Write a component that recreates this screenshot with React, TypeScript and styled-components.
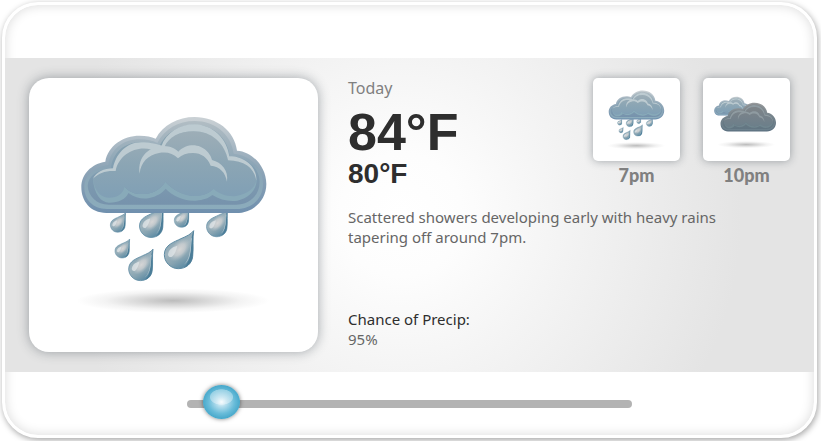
import React, { useId, useState } from "react";
import styled, { createGlobalStyle } from "styled-components";

const GlobalStyle = createGlobalStyle`
  *, *::before, *::after { box-sizing: border-box; }
  body {
    margin: 0;
    background: #fff;
    color: #666;
    font: 15px/20px "Noto Sans", "Open Sans", sans-serif;
  }
  h1, h2, p, dl, dd, ul { margin: 0; padding: 0; }
`;

const Card = styled.main`
  display: flex;
  flex-direction: column;
  margin: 2px 4px 3px 2px;
  padding: 53px 0 0;
  border: 3px solid #fff;
  border-radius: 36px;
  background: #fff;
  box-shadow:
    1px 2px 6px rgba(0, 0, 0, 0.36),
    inset 0 0 12px rgba(0, 0, 0, 0.15);
`;

const Panel = styled.section`
  display: flex;
  gap: 30px;
  padding: 20px 24px;
  background: radial-gradient(circle 340px at 49% 50%, #fff 0%, #fdfdfd 18%, #f3f3f3 50%, #e4e4e4 100%);
`;

const Tile = styled.div<{ $large?: boolean }>`
  flex: none;
  display: flex;
  justify-content: center;
  width: ${(p) => (p.$large ? 289 : 87)}px;
  height: ${(p) => (p.$large ? 274 : 83)}px;
  padding-top: ${(p) => (p.$large ? 27 : 9)}px;
  border-radius: ${(p) => (p.$large ? 20 : 5)}px;
  background: #fff;
  box-shadow: 0 0 ${(p) => (p.$large ? 12 : 9)}px rgba(70, 80, 88, 0.48);
`;

const Picture = styled.svg<{ $size: number }>`
  flex: none;
  width: ${(p) => p.$size}px;
  height: ${(p) => p.$size}px;
  overflow: visible;
`;

const Details = styled.div`
  flex: 1;
  min-width: 0;
  display: flex;
  flex-direction: column;
`;

const Summary = styled.div`
  display: flex;
  justify-content: space-between;
  min-height: 129px;
`;

const Day = styled.h1`
  font-size: 16px;
  font-weight: 400;
  line-height: 20px;
  color: #808080;
`;

const Temperature = styled.p<{ $size: number; $line: number }>`
  font: bold ${(p) => p.$size}px/${(p) => p.$line}px "Liberation Sans", Arial, sans-serif;
  color: #2e2e2e;
`;

const Hours = styled.ul`
  display: flex;
  gap: 23px;
  list-style: none;
`;

const Hour = styled.li`
  display: flex;
  flex-direction: column;
  align-items: center;
  gap: 3px;
`;

const HourLabel = styled.h2`
  font: 900 18px/22px Lato, sans-serif;
  color: #808080;
`;

const Description = styled.p`
  max-width: 400px;
`;

const Precipitation = styled.dl`
  margin-top: auto;
  margin-bottom: 3px;

  dt { color: #2e2e2e; }
`;

const Footer = styled.footer`
  display: flex;
  justify-content: center;
  padding: 15px 0 14px;
`;

const TimeSlider = styled.input`
  appearance: none;
  width: 55%;
  height: 34px;
  margin: 0;
  background: none;
  cursor: pointer;

  &::-webkit-slider-runnable-track {
    height: 8px;
    border-radius: 4px;
    background: #b3b3b3;
  }

  &::-webkit-slider-thumb {
    appearance: none;
    width: 37px;
    height: 34px;
    margin-top: -15px;
    border: none;
    border-radius: 50%;
    background:
      radial-gradient(ellipse 12px 8px at 50% 12px, rgba(255, 255, 255, 0.34) 92%, transparent 100%),
      radial-gradient(ellipse 19px 17px at 50% 50%, #f4fbfd 0%, #b4dded 28%, #69bcd9 68%, #45a7ca 100%);
    box-shadow: 0 0 4px rgba(0, 0, 0, 0.5);
  }
`;

const CLOUD =
  "M110 322C62 322 35 286 35 245C35 205 65 175 107 168C115 120 160 90 210 90C230 90 245 93 258 99C280 58 325 34 375 34C440 34 495 75 502 135C550 138 590 185 590 235C590 285 550 322 500 322Z";
const CLOUD_MID =
  "M112 310C68 310 44 280 44 245C44 210 74 184 116 178C122 132 160 101 210 101C232 101 248 105 263 112C284 70 326 46 375 46C434 46 484 84 492 144C544 149 580 188 580 235C580 279 546 310 500 310Z";
const CLOUD_INNER =
  "M118 297C80 297 56 270 54 240C56 213 80 192 124 188C128 142 164 110 212 110C234 110 252 114 268 123C288 80 328 57 375 57C428 57 474 94 480 152C535 154 570 190 570 228C570 268 540 297 498 297Z";
const SCALLOPS =
  "M70 220C72 265 95 291 118 291C148 291 169 280 176 262C196 276 216 281 236 278C262 272 278 262 288 249C306 268 340 287 378 285C402 283 418 277 428 268C450 282 478 289 503 285C543 276 562 248 561 220L429 250C419 263 400 270 375 270C340 270 306 250 287 228C275 248 255 262 226 265C200 267 178 260 165 243Z";
const PUFFS =
  "M70 220C75 260 95 276 118 276C146 276 160 263 165 243C178 260 200 267 226 265C255 262 275 248 287 228C306 250 340 271 375 271C400 271 419 263 432 250C448 266 475 274 500 271C540 264 560 242 560 220C558 188 525 166 475 163C465 110 425 77 372 77C325 77 290 100 275 130C230 112 145 120 137 190C105 190 80 200 70 220Z";
const BACK_RIM =
  "M275 122C290 80 330 56 375 56C430 58 472 98 479 152C525 152 562 184 560 224C552 185 525 166 475 164C465 112 425 77 372 77C330 77 298 94 284 124Z";
const LEFT_RIM =
  "M70 219C80 199 102 188 130 188C137 150 166 110 215 110C242 110 262 116 283 122L246 132C202 118 147 145 138 196C110 194 86 202 70 219Z";
const FRONT_RIM =
  "M210 204C202 150 242 121 283 121C303 122 316 128 326 138C345 117 373 115 392 123C412 131 425 150 427 163C456 170 477 194 472 228C467 200 451 183 423 180C414 156 395 142 370 142C351 142 337 147 325 158C310 142 290 138 268 142C235 148 213 170 210 204Z";
const DROP =
  "M46-72C42-48 46-20 43 5C41 28 22 42 0 42C-24 42-42 22-42 0C-42-30-12-38 8-48C24-55 38-61 46-72Z";

const DROPS = [
  [144, 358, 0.52],
  [244, 361, 0.82],
  [335, 344, 0.5],
  [441, 363, 0.72],
  [157, 436, 0.5],
  [212, 490, 0.83],
  [326, 447, 1],
];

const palettes = {
  blue: {
    rim: ["#c9d0d4", "#91a7b8", "#7090ae"],
    mid: ["#b3bec4", "#8ba5b6", "#8bacbc"],
    inner: ["#8ba3ad", "#829fb2", "#7490ab"],
    puffs: ["#a4b1b8", "#8ba5b4", "#7b9db6"],
    light: "#bdcbd1",
    scallop: "#88aab9",
  },
  gray: {
    rim: ["#96999b", "#74828a", "#5b7080"],
    mid: ["#8b8f92", "#74838c", "#6b808c"],
    inner: ["#7f8487", "#6f7e87", "#5f7481"],
    puffs: ["#828688", "#75818a", "#677e8a"],
    light: "#8f9ba1",
    scallop: "#70868f",
  },
};

type Tone = keyof typeof palettes;

function Cloud({ tone, transform }: { tone: Tone; transform?: string }) {
  const id = useId();
  const colors = palettes[tone];
  const layers = { rim: CLOUD, mid: CLOUD_MID, inner: CLOUD_INNER };
  const gradient = (name: "rim" | "mid" | "inner" | "puffs") => (
    <linearGradient key={name} id={`${id}${name}`} gradientUnits="userSpaceOnUse" x1="0" y1="40" x2="0" y2="320">
      <stop offset="0" stopColor={colors[name][0]} />
      <stop offset="0.5" stopColor={colors[name][1]} />
      <stop offset="1" stopColor={colors[name][2]} />
    </linearGradient>
  );
  return (
    <g transform={transform}>
      <defs>{(["rim", "mid", "inner", "puffs"] as const).map(gradient)}</defs>
      {(["rim", "mid", "inner"] as const).map((name) => (
        <path key={name} d={layers[name]} fill={`url(#${id}${name})`} />
      ))}
      <path d={SCALLOPS} fill={colors.scallop} />
      <path d={PUFFS} fill={`url(#${id}puffs)`} />
      <path d={`${LEFT_RIM}${BACK_RIM}`} fill={colors.light} />
      <path d={FRONT_RIM} fill={colors.light} />
    </g>
  );
}

function Raindrops() {
  const id = useId();
  return (
    <g>
      <defs>
        <linearGradient id={`${id}d`} x1="0.3" y1="0.1" x2="0.7" y2="1">
          <stop offset="0" stopColor="#7d9dad" />
          <stop offset="0.4" stopColor="#9fb4be" />
          <stop offset="0.7" stopColor="#86a3b1" />
          <stop offset="1" stopColor="#5687a2" />
        </linearGradient>
        <radialGradient id={`${id}g`}>
          <stop offset="0" stopColor="#d6d6d6" />
          <stop offset="0.5" stopColor="#cccfd1" stopOpacity="0.8" />
          <stop offset="1" stopColor="#b5c1c7" stopOpacity="0" />
        </radialGradient>
      </defs>
      {DROPS.map(([x, y, scale]) => (
        <g key={`${x}-${y}`} transform={`translate(${x} ${y}) scale(${scale})`}>
          <path d={DROP} fill={`url(#${id}d)`} stroke="#5f8ca4" strokeWidth="3" />
          <path d="M46-72C42-48 46-20 43 5C41 22 31 34 17 39C34 22 38-4 37-26C37-44 41-60 46-72Z" fill="#4b7d98" />
          <ellipse cx="4" cy="-15" rx="42" ry="24" transform="rotate(-48 4 -15)" fill={`url(#${id}g)`} />
          <path d="M-31 0C-29-16-20-22-3-27C-6-12-12 1-19 6C-25 9-30 6-31 0Z" fill="#dfe4e6" opacity="0.8" />
          <path d="M38-48C35-22 38 12 16 30C39 16 37-18 41-52Z" fill="#c3d3da" opacity="0.85" />
        </g>
      ))}
    </g>
  );
}

function WeatherPicture({ kind, size }: { kind: "showers" | "cloudy"; size: number }) {
  const id = useId();
  return (
    <Picture $size={size} viewBox="-2 -2 630 630" role="img" aria-label={kind === "showers" ? "Showers" : "Cloudy"}>
      <defs>
        <radialGradient id={id}>
          <stop offset="0" stopColor="#bcbcbc" />
          <stop offset="0.35" stopColor="#d8d8d8" />
          <stop offset="0.7" stopColor="#f3f3f3" />
          <stop offset="1" stopColor="#fff" />
        </radialGradient>
      </defs>
      <ellipse cx="310" cy={kind === "showers" ? 585 : 574} rx="290" ry="37" fill={`url(#${id})`} />
      {kind === "showers" ? (
        <>
          <Raindrops />
          <Cloud tone="blue" />
        </>
      ) : (
        <>
          <Cloud tone="blue" transform="translate(-33 73) scale(0.65)" />
          <Cloud tone="gray" transform="translate(18 121)" />
        </>
      )}
    </Picture>
  );
}

export default function App() {
  const [time, setTime] = useState(4);
  return (
    <>
      <GlobalStyle />
      <Card>
        <Panel>
          <Tile $large>
            <WeatherPicture kind="showers" size={210} />
          </Tile>
          <Details>
            <Summary>
              <div>
                <Day>Today</Day>
                <Temperature $size={52} $line={68}>84°F</Temperature>
                <Temperature $size={28} $line={16}>80°F</Temperature>
              </div>
              <Hours>
                <Hour>
                  <Tile>
                    <WeatherPicture kind="showers" size={63} />
                  </Tile>
                  <HourLabel>7pm</HourLabel>
                </Hour>
                <Hour>
                  <Tile>
                    <WeatherPicture kind="cloudy" size={63} />
                  </Tile>
                  <HourLabel>10pm</HourLabel>
                </Hour>
              </Hours>
            </Summary>
            <Description>
              Scattered showers developing early with heavy rains tapering off around 7pm.
            </Description>
            <Precipitation>
              <dt>Chance of Precip:</dt>
              <dd>95%</dd>
            </Precipitation>
          </Details>
        </Panel>
        <Footer>
          <TimeSlider
            type="range"
            aria-label="Time of day"
            min={0}
            max={100}
            value={time}
            onChange={(event) => setTime(Number(event.target.value))}
          />
        </Footer>
      </Card>
    </>
  );
}
